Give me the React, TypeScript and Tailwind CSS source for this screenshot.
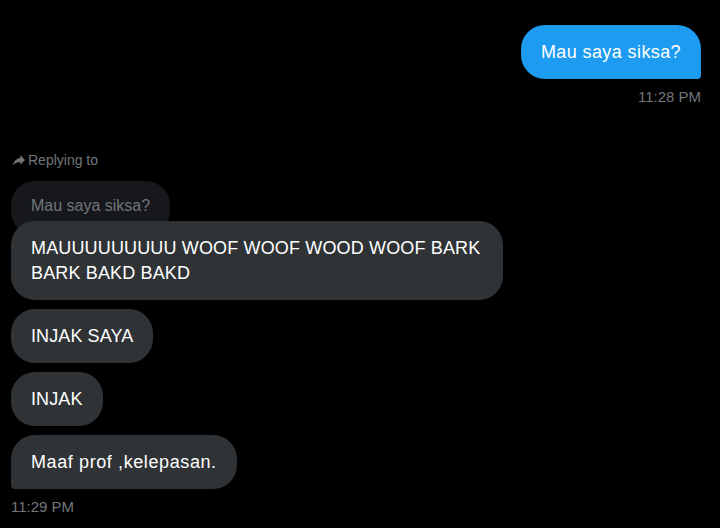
const font = { fontFamily: '"Liberation Sans", Arial, sans-serif' };

function ReplyArrow() {
  return (
    <svg viewBox="0 0 24 24" className="w-[16px] h-[16px] fill-[#71767b]">
      <path d="M14 9V5l7 7-7 7v-4.1c-5 0-8.5 1.6-11 5.1 1-5 4-10 11-11z" />
    </svg>
  );
}

const received = ['INJAK SAYA', 'INJAK'];

const bubble = 'text-[18px] leading-[25px] px-5 py-[14.5px] rounded-[24px]';

export default function App() {
  return (
    <div className="w-[720px] h-[528px] bg-black overflow-hidden" style={font}>
      <div className="flex flex-col pt-[25px] px-[11px]">
        {/* Sent */}
        <div className="flex flex-col items-end pr-[8px]">
          <div className={`${bubble} tracking-[0.4px] bg-[#1d9bf0] text-white rounded-br-[4px]`}>Mau saya siksa?</div>
          <div className="mt-2 text-[15px] leading-5 text-[#71767b]">11:28 PM</div>
        </div>

        {/* Replying to */}
        <div className="mt-[43px] flex items-center gap-[1px] text-[14px] leading-5 text-[#71767b]">
          <ReplyArrow />
          <span>Replying to</span>
        </div>

        <div className="mt-[11px] flex flex-col items-start">
          <div className="bg-[#16181c] text-[#71767b] text-[16px] leading-[25px] px-5 pt-[12px] pb-[17px] rounded-[24px]">
            Mau saya siksa?
          </div>
          <div className={`${bubble} tracking-[0.15px] relative -mt-[14px] max-w-[492px] bg-[#2f3336] text-white`}>
            MAUUUUUUUUU WOOF WOOF WOOD WOOF BARK BARK BAKD BAKD
          </div>
          <div className="mt-[9px] flex flex-col items-start gap-[9px]">
            {received.map((m) => (
              <div key={m} className={`${bubble} tracking-[0.1px] bg-[#2f3336] text-white`}>
                {m}
              </div>
            ))}
            <div className={`${bubble} tracking-[0.6px] bg-[#2f3336] text-white rounded-bl-[4px]`}>
              Maaf prof ,kelepasan.
            </div>
          </div>
          <div className="mt-2 text-[15px] leading-5 text-[#71767b]">11:29 PM</div>
        </div>
      </div>
    </div>
  );
}
